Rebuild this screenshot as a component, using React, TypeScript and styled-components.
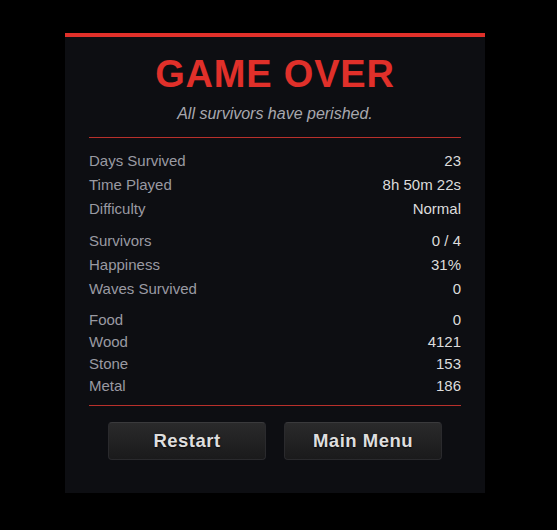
import React from 'react';
import styled, { createGlobalStyle } from 'styled-components';

const GlobalStyle = createGlobalStyle`
    html, body {
        margin: 0;
        padding: 0;
        background: #000;
    }
    body {
        font-family: "Liberation Sans", Arial, sans-serif;
    }
`;

const Screen = styled.div`
    width: 557px;
    height: 530px;
    display: flex;
    justify-content: flex-start;
    padding: 33px 0 0 65px;
    box-sizing: border-box;
    background: #000;
`;

const Panel = styled.div`
    width: 420px;
    height: 460px;
    box-sizing: border-box;
    background: #0d0e12;
    border-top: 4px solid #e0302a;
    padding: 18px 24px 0;
    display: flex;
    flex-direction: column;
`;

const Title = styled.h1`
    margin: 0;
    font-size: 38px;
    line-height: 38px;
    font-weight: bold;
    letter-spacing: 0.8px;
    color: #e0302a;
    text-align: center;
`;

const Subtitle = styled.p`
    margin: 11px 0 0;
    font-size: 16px;
    line-height: 20px;
    font-style: italic;
    color: #a8a8ae;
    text-align: center;
`;

const Divider = styled.hr<{ $top: number; $bottom: number }>`
    border: 0;
    height: 1px;
    background: #b8302b;
    margin: ${p => p.$top}px 0 ${p => p.$bottom}px;
`;

const Group = styled.div<{ $gap?: number }>`
    display: flex;
    flex-direction: column;
    margin-top: ${p => p.$gap || 0}px;
`;

const Row = styled.div<{ $h: number }>`
    display: flex;
    justify-content: space-between;
    font-size: 15px;
    line-height: ${p => p.$h}px;
`;

const Label = styled.span`
    color: #9a9aa2;
`;

const Value = styled.span`
    color: #dcdcdc;
`;

const Buttons = styled.div`
    display: flex;
    justify-content: center;
    gap: 18px;
`;

const Button = styled.button`
    width: 158px;
    height: 38px;
    box-sizing: border-box;
    border: 1px solid #2a2a2d;
    border-top-color: #3a3a3c;
    border-radius: 4px;
    background: linear-gradient(#2a2a2b, #1a1a1b);
    color: #dedede;
    font-family: "Liberation Sans", Arial, sans-serif;
    font-weight: bold;
    font-size: 18.5px;
    letter-spacing: 0.5px;
    cursor: pointer;
    padding: 0;
    text-shadow: 0 1px 2px rgba(0, 0, 0, 0.8);
`;

const groups = [
    {
        h: 24,
        rows: [
            ['Days Survived', '23'],
            ['Time Played', '8h 50m 22s'],
            ['Difficulty', 'Normal'],
        ],
    },
    {
        h: 24,
        rows: [
            ['Survivors', '0 / 4'],
            ['Happiness', '31%'],
            ['Waves Survived', '0'],
        ],
    },
    {
        h: 22,
        rows: [
            ['Food', '0'],
            ['Wood', '4121'],
            ['Stone', '153'],
            ['Metal', '186'],
        ],
    },
];

export default function App() {
    return (
        <>
            <GlobalStyle />
            <Screen>
                <Panel>
                    <Title>GAME OVER</Title>
                    <Subtitle>All survivors have perished.</Subtitle>
                    <Divider $top={13} $bottom={11} />
                    {groups.map((g, i) => (
                        <Group key={i} $gap={i ? 8 : 0}>
                            {g.rows.map(([label, value]) => (
                                <Row key={label} $h={g.h}>
                                    <Label>{label}</Label>
                                    <Value>{value}</Value>
                                </Row>
                            ))}
                        </Group>
                    ))}
                    <Divider $top={8} $bottom={16} />
                    <Buttons>
                        <Button>Restart</Button>
                        <Button>Main Menu</Button>
                    </Buttons>
                </Panel>
            </Screen>
        </>
    );
}
